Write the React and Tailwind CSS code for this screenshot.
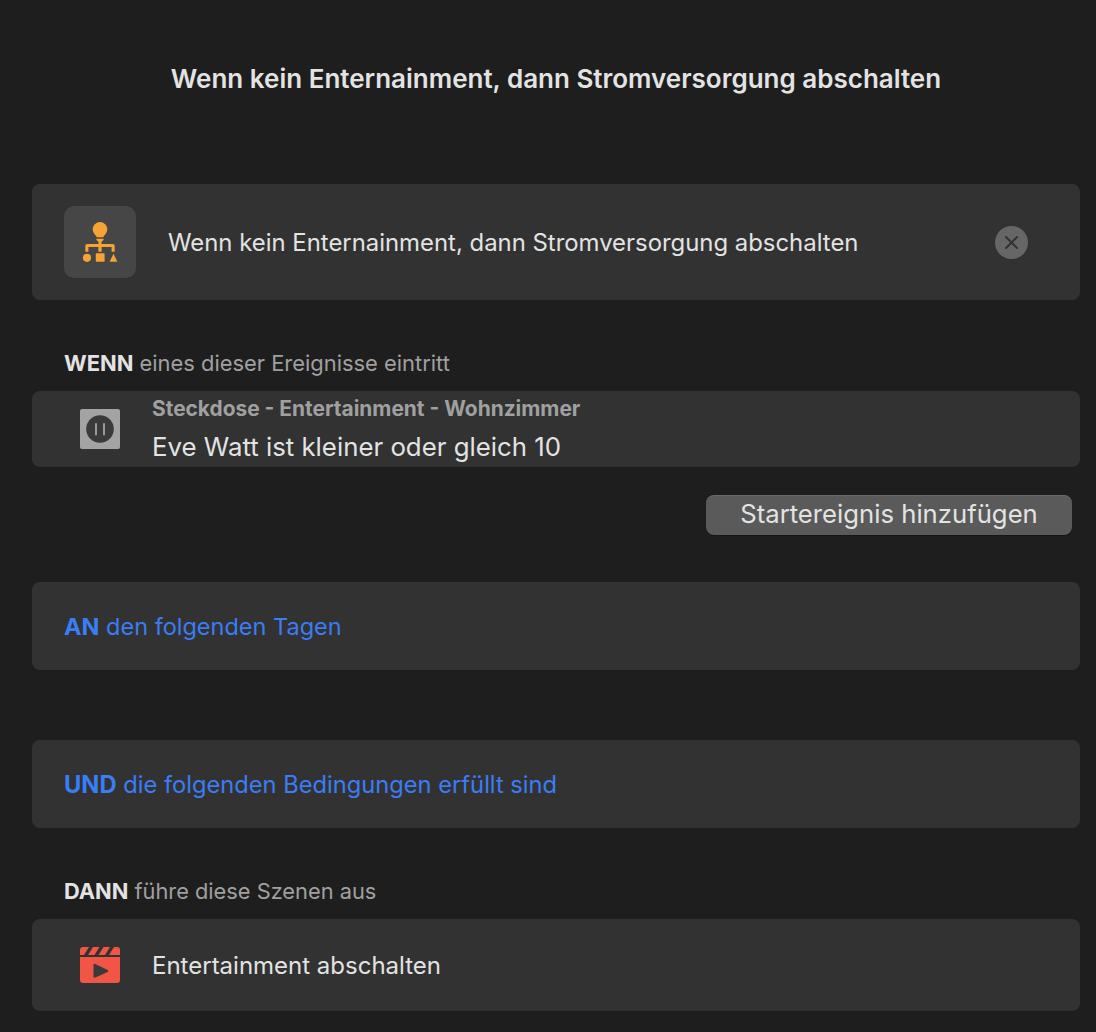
import React from "react";

const font = { fontFamily: "Inter, 'Liberation Sans', sans-serif" };

function SceneIcon() {
  return (
    <svg width="40" height="60" viewBox="0 0 40 60" fill="#f5a236">
      <circle cx="20" cy="17.300" r="7.300" />
      <path d="M14.500 21.500h11l-2.300 3.800h-6.400z" />
      <path d="M16.400 26.800h7.200v1.300l-2.100 1.700v2.500h-3v-2.500l-2.100-1.700z" />
      <path d="M5.300 39.700V34a2 2 0 0 1 2-2h25.400a2 2 0 0 1 2 2v5.700h-3.100v-4.600h-10v4.600h-3.200v-4.600h-10v4.600z" />
      <circle cx="7" cy="45.800" r="4.100" />
      <rect x="15.800" y="41.300" width="8.800" height="8.500" rx="0.600" />
      <path d="M33.500 41.800l3.900 8h-7.800z" />
    </svg>
  );
}

function PlugIcon() {
  return (
    <svg width="40" height="40" viewBox="0 0 40 40">
      <rect width="40" height="40" rx="2" fill="#a3a3a3" />
      <circle cx="20" cy="20" r="13.800" fill="#3a3a3a" />
      <rect x="15" y="14" width="2" height="12.500" rx="1" fill="#999999" />
      <rect x="23" y="14" width="2" height="12.500" rx="1" fill="#999999" />
    </svg>
  );
}

function ClapIcon() {
  return (
    <svg width="40" height="36" viewBox="0 0 40 36">
      <path d="M3 0h6l-5 8H0V3a3 3 0 0 1 3-3z" fill="#f05545" />
      <path d="M13 0h6.500l-5 8H8z" fill="#f05545" />
      <path d="M23.500 0H30l-5 8h-6.500z" fill="#f05545" />
      <path d="M34 0h3a3 3 0 0 1 3 3v5H29z" fill="#f05545" />
      <path d="M0 10h40v23a3 3 0 0 1-3 3H3a3 3 0 0 1-3-3z" fill="#f05545" />
      <path d="M13.500 18c0-.9.900-1.400 1.700-1l12.500 6c.8.400.8 1.500 0 1.900l-12.500 5.600c-.8.400-1.700-.1-1.700-1z" fill="#3a3a3a" />
    </svg>
  );
}

export default function App() {
  return (
    <div style={font} className="h-[1032px] w-[1096px] overflow-hidden bg-[#1e1e1e] pl-8 pr-4 antialiased">
      <h1 className="pt-[63px] text-center text-[26px] leading-[32px] font-semibold text-[#e3e3e3]">
        Wenn kein Enternainment, dann Stromversorgung abschalten
      </h1>

      <div className="mt-[89px] flex h-[116px] items-center rounded-lg bg-[#323232] pl-8 pr-[52px]">
        <div className="flex h-[72px] w-[72px] items-center justify-center rounded-[10px] bg-[#464646]">
          <SceneIcon />
        </div>
        <span className="ml-[32px] flex-1 pt-[2px] text-[23.900px] text-[#e3e3e3]">
          Wenn kein Enternainment, dann Stromversorgung abschalten
        </span>
        <div className="flex h-[33px] w-[33px] items-center justify-center rounded-full bg-[#666666]">
          <svg width="15" height="15" viewBox="0 0 15 15" stroke="#323232" strokeWidth="2" strokeLinecap="round">
            <path d="M2 2l11 11M13 2L2 13" />
          </svg>
        </div>
      </div>

      <p className="mt-[49px] pl-8 text-[21.900px] leading-[28px] text-[#a0a0a0]">
        <b className="font-bold text-[#e3e3e3]">WENN</b> eines dieser Ereignisse eintritt
      </p>
      <div className="mt-[14px] flex h-[76px] items-center rounded-lg bg-[#323232] pl-12">
        <PlugIcon />
        <div className="ml-8">
          <div className="text-[20.900px] leading-[26px] font-bold text-[#a0a0a0]">Steckdose - Entertainment - Wohnzimmer</div>
          <div className="mt-[9px] text-[25.800px] leading-[32px] text-[#e3e3e3]">Eve Watt ist kleiner oder gleich 10</div>
        </div>
      </div>

      <div className="mt-7 flex justify-end pr-2">
        <button className="h-10 w-[366px] rounded-lg border-t border-[#6a6a6a] bg-[#5a5a5a] pb-[3px] text-[25.700px] leading-[36px] text-[#e3e3e3] shadow-[0_1px_1px_rgba(0,0,0,0.3)]">
          Startereignis hinzufügen
        </button>
      </div>

      <div className="mt-[47px] flex h-[88px] items-center rounded-lg bg-[#323232] pl-8 pt-[2px] text-[23.500px] text-[#3a7df5]">
        <span><b className="font-bold">AN</b> den folgenden Tagen</span>
      </div>

      <div className="mt-[70px] flex h-[88px] items-center rounded-lg bg-[#323232] pl-8 pt-[2px] text-[23.700px] text-[#3a7df5]">
        <span><b className="font-bold">UND</b> die folgenden Bedingungen erfüllt sind</span>
      </div>

      <p className="mt-[49px] pl-8 text-[21.800px] leading-[28px] text-[#a0a0a0]">
        <b className="font-bold text-[#e3e3e3]">DANN</b> führe diese Szenen aus
      </p>
      <div className="mt-[14px] flex h-[92px] items-center rounded-lg bg-[#323232] pl-12">
        <ClapIcon />
        <span className="ml-8 pt-[2px] text-[24px] text-[#e3e3e3]">Entertainment abschalten</span>
      </div>
    </div>
  );
}
